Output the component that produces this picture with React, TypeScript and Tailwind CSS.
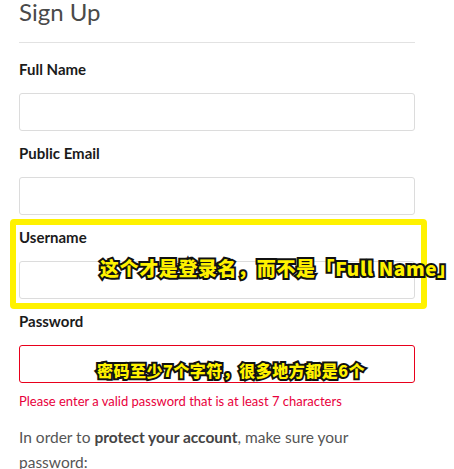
import React from "react";

function Field({ label, error }: { label: string; error?: boolean }) {
  return (
    <div>
      <div className="text-[15px] font-bold leading-[20px] text-[#1b1b1b]">{label}</div>
      <div
        className={
          "mt-[14px] h-[38px] w-full rounded-[3px] border bg-white " +
          (error ? "border-[#e8001c]" : "border-[#dcdcdc]")
        }
      />
    </div>
  );
}

export default function App() {
  return (
    <div className="relative h-[469px] w-[454px] overflow-hidden bg-white" style={{ fontFamily: "Lato, 'Noto Sans CJK SC', sans-serif" }}>
      <div className="w-[396px] ml-[19px]">
        <h1 className="text-[24px] leading-[24px] text-[#4a4a4a]">Sign Up</h1>
        <div className="mt-[18px] h-px bg-[#e2e2e2]" />
        <div className="mt-[16px]">
          <Field label="Full Name" />
        </div>
        <div className="mt-[12px]">
          <Field label="Public Email" />
        </div>
        <div className="mt-[12px]">
          <Field label="Username" />
        </div>
        <div className="mt-[12px]">
          <Field label="Password" error />
        </div>
        <div className="mt-[9px] text-[13px] leading-[18px] text-[#e8003c]">
          Please enter a valid password that is at least 7 characters
        </div>
        <p className="mt-[15px] text-[15.5px] leading-[25px] text-[#555]">
          In order to <span className="font-bold text-[#444]">protect your account</span>, make sure your password:
        </p>
      </div>

      <div className="absolute left-[10px] top-[219px] h-[90px] w-[417px] rounded-[4px] border-[6px] border-[#fff200]" />
      <div
        className="absolute left-[100px] top-[255px] whitespace-nowrap text-[19px] font-black leading-[26px] tracking-[0.6px] text-[#fff200] [paint-order:stroke_fill] [-webkit-text-stroke:4px_#111]"
        style={{ fontFamily: "'Noto Sans CJK SC', sans-serif" }}
      >
        这个才是登录名，而不是「Full Name」
      </div>
      <div
        className="absolute left-[97px] top-[357px] whitespace-nowrap text-[16px] font-black leading-[26px] tracking-[0.5px] text-[#fff200] [paint-order:stroke_fill] [-webkit-text-stroke:4px_#111]"
        style={{ fontFamily: "'Noto Sans CJK SC', sans-serif" }}
      >
        密码至少7个字符，很多地方都是6个
      </div>
    </div>
  );
}
